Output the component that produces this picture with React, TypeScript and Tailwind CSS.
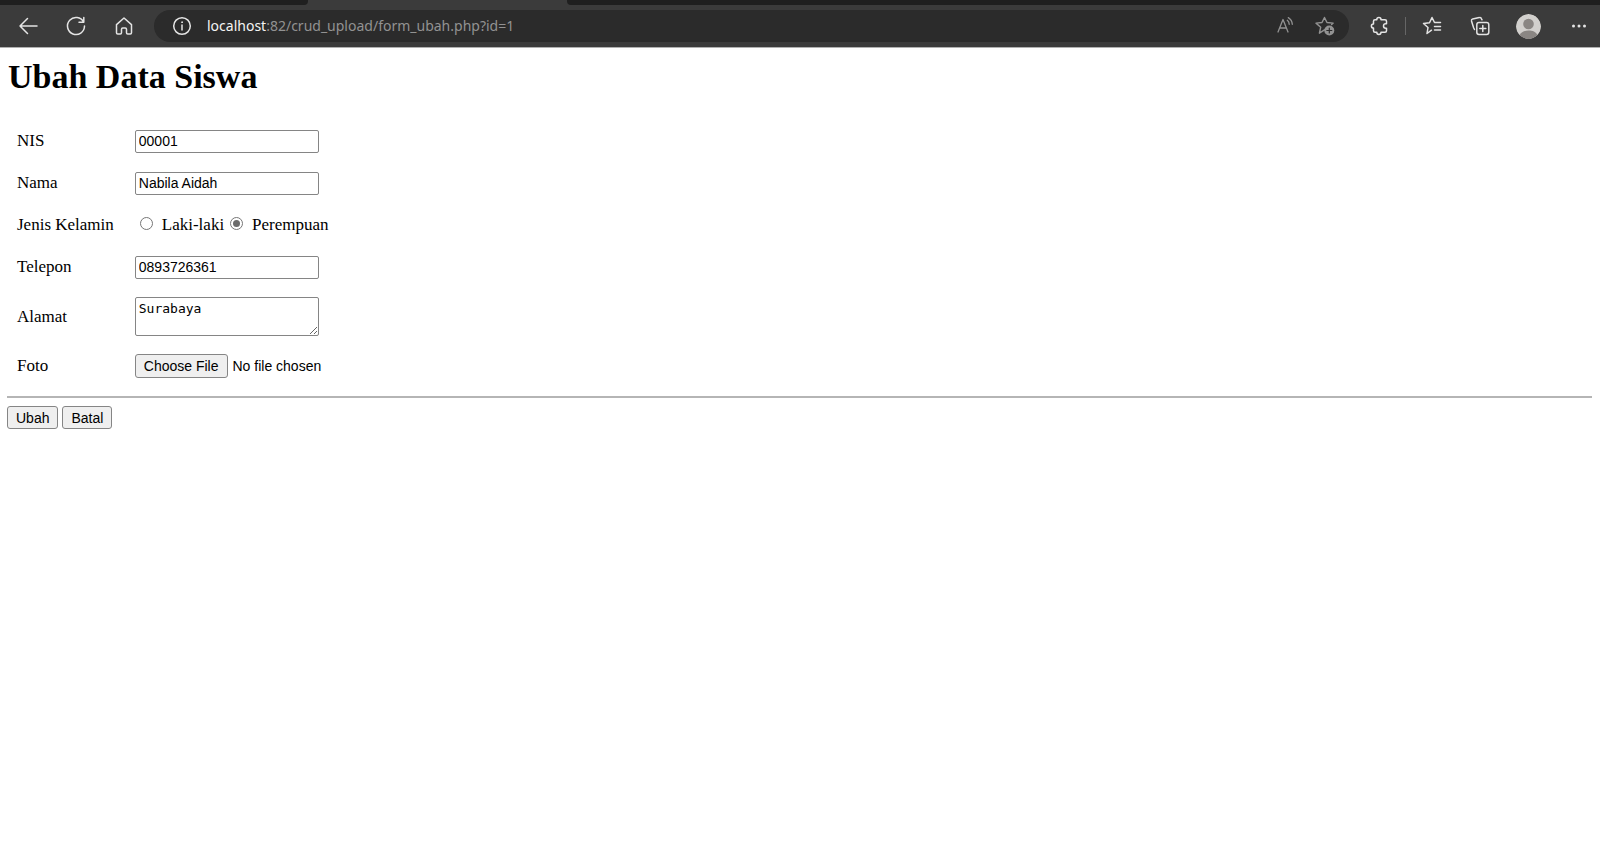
import type { ReactNode } from "react";

function ToolbarButton({ label, children }: { label: string; children: ReactNode }) {
  return (
    <button type="button" aria-label={label} className="size-6 shrink-0">
      <svg viewBox="0 0 24 24" fill="none" stroke="currentColor" strokeWidth="1.5" strokeLinecap="round" strokeLinejoin="round" className="size-6">
        {children}
      </svg>
    </button>
  );
}

function BrowserBar() {
  return (
    <header className="bg-[#3b3b3b] text-[#e4e4e4]">
      {/* Tab strip */}
      <div className="flex h-[5px]">
        <div className="w-[308px] rounded-br-[4px] bg-[#1f1f1f]" />
        <div className="w-[259px]" />
        <div className="flex-1 rounded-bl-[4px] bg-[#1f1f1f]" />
      </div>

      <div className="flex h-[43px] items-center border-b border-[#b0b0b0] pr-[9px] pl-4">
        <nav className="mr-[18px] flex gap-6">
          <ToolbarButton label="Back">
            <path d="M21 12H4M11.500 4.500 4 12l7.500 7.500" />
          </ToolbarButton>
          <ToolbarButton label="Refresh">
            <path d="M19.600 8.200A8.500 8.500 0 1 0 20.500 12M19.800 3.500v4.800H15" />
          </ToolbarButton>
          <ToolbarButton label="Home">
            <path d="M4.500 10.600 12 4l7.500 6.600v8.200a1.200 1.200 0 0 1-1.200 1.200h-2.600a1.200 1.200 0 0 1-1.200-1.200v-3.600a1.200 1.200 0 0 0-1.200-1.200h-2.600a1.200 1.200 0 0 0-1.200 1.200v3.600A1.200 1.200 0 0 1 8.300 20H5.700a1.200 1.200 0 0 1-1.200-1.200z" />
          </ToolbarButton>
        </nav>

        <div className="mr-[18px] flex h-8 flex-1 items-center rounded-full bg-[#2b2b2b] pr-3 pl-4">
          <ToolbarButton label="Site information">
            <circle cx="12" cy="12" r="8.300" />
            <path d="M12 11v5" />
            <circle cx="12" cy="8.200" r="0.500" fill="currentColor" strokeWidth="0.900" />
          </ToolbarButton>
          <p className="ml-[13px] flex-1 font-['Noto_Sans','Open_Sans',sans-serif] text-[14px] leading-5 text-[#929292]">
            <span className="text-[#f4f4f4]">localhost</span>:82/crud_upload/form_ubah.php?id=1
          </p>
          <div className="flex gap-[15px] text-[#929292]">
            <ToolbarButton label="Read aloud">
              <path d="m4 18 5-12.500L14 18M5.700 14h6.600" strokeWidth="1.300" />
              <path d="M13.300 6.300a5 5 0 0 1 1.900 4M14.300 3.600a8.500 8.500 0 0 1 4 6.700" strokeWidth="1.300" />
            </ToolbarButton>
            <ToolbarButton label="Add this page to favorites">
              <path d="m11.500 15.800-5.100 3.400 1.300-6L3 9.100l6-.6L11.500 3.500 14 8.500l6.200.6-1.600 1.500" strokeWidth="1.400" />
              <circle cx="16.300" cy="16.500" r="5" fill="currentColor" stroke="none" />
              <path d="M16.300 14v5M13.800 16.500h5" stroke="#2b2b2b" strokeWidth="1.200" />
            </ToolbarButton>
          </div>
        </div>

        <ToolbarButton label="Extensions">
          <path d="M9.800 5.700a2.100 2.100 0 0 1 4.200 0h4a1.500 1.500 0 0 1 1.500 1.500v2.600h-.8a2.200 2.200 0 0 0 0 4.400h.8v2.600a1.500 1.500 0 0 1-1.500 1.500h-4a2.100 2.100 0 0 1-4.200 0H8a1.500 1.500 0 0 1-1.500-1.500v-2.700a2.100 2.100 0 0 1 0-4.200V7.200A1.500 1.500 0 0 1 8 5.700z" />
        </ToolbarButton>
        <div className="mx-3.5 h-[18px] w-px bg-[#666666]" />
        <div className="flex items-center gap-6">
          <ToolbarButton label="Favorites">
            <path d="M11.500 16.200 7 19.500l1-6-4.500-4 6-.8L12 3.500l2.500 5H20.500M14.500 12.500h6M14.500 16h6" />
          </ToolbarButton>
          <ToolbarButton label="Collections">
            <path d="M6.500 15.500 5.700 14 3.500 7a1.800 1.800 0 0 1 1.200-2.100l6.600-1.300a1.800 1.800 0 0 1 2.200 1.200l.5 1" />
            <rect x="8.800" y="8.500" width="12" height="12" rx="2.200" />
            <path d="M14.800 11.500v6M11.800 14.500h6" />
          </ToolbarButton>
          <button type="button" aria-label="Profile" className="size-[25px] shrink-0 overflow-hidden rounded-full">
            <svg viewBox="0 0 25 25" className="size-[25px]">
              <circle cx="12.500" cy="12.500" r="12.500" fill="#d2d0cd" />
              <circle cx="12.500" cy="10" r="5.300" fill="#8a8683" />
              <path d="M3.500 21.200C5 17.800 8.500 16.500 12.500 16.500s7.500 1.300 9 4.700A12.500 12.500 0 0 1 3.500 21.200z" fill="#8a8683" />
            </svg>
          </button>
        </div>
        <div className="ml-[26px] flex">
          <ToolbarButton label="Settings and more">
            <g fill="currentColor" stroke="none">
              <circle cx="6.500" cy="12" r="1.500" />
              <circle cx="12" cy="12" r="1.500" />
              <circle cx="17.500" cy="12" r="1.500" />
            </g>
          </ToolbarButton>
        </div>
      </div>
    </header>
  );
}

const fieldClass =
  "block w-[184px] rounded-[2px] border border-[#858585] bg-white px-[3px] font-['Liberation_Sans',Arial,sans-serif] text-[14px] text-black";

const buttonClass =
  "h-[23px] rounded-[3px] border border-[#858585] bg-[#efefef] px-2 font-['Liberation_Sans',Arial,sans-serif] text-[14px] leading-5 text-black";

function Row({ label, htmlFor, children }: { label: string; htmlFor?: string; children: ReactNode }) {
  return (
    <tr>
      <th scope="row" className="py-[9px] pr-[21px] text-left font-normal">
        {htmlFor ? <label htmlFor={htmlFor}>{label}</label> : label}
      </th>
      <td className="py-[9px]">{children}</td>
    </tr>
  );
}

function Gender({ label, checked }: { label: string; checked?: boolean }) {
  return (
    <label className="flex items-start gap-[9px]">
      <input
        type="radio"
        name="jenis_kelamin"
        defaultChecked={checked}
        className="mt-1 size-[13px] appearance-none rounded-full border border-[#767676] bg-white p-[2px] checked:bg-[#6b6b6b] checked:bg-clip-content"
      />
      {label}
    </label>
  );
}

export default function App() {
  return (
    <div className="min-h-screen bg-white font-['Liberation_Serif','Times_New_Roman',serif] text-[17px] leading-6 text-black">
      <BrowserBar />

      <main className="pt-[9px] pr-2 pl-[7px]">
        <h1 className="pl-px text-[34px] leading-10 font-bold">Ubah Data Siswa</h1>

        <form className="mt-[23px]">
          <table className="ml-2.5 border-collapse">
            <tbody>
              <Row label="NIS" htmlFor="nis">
                <input id="nis" type="text" defaultValue="00001" className={`${fieldClass} h-[23px]`} />
              </Row>
              <Row label="Nama" htmlFor="nama">
                <input id="nama" type="text" defaultValue="Nabila Aidah" className={`${fieldClass} h-[23px]`} />
              </Row>
              <Row label="Jenis Kelamin">
                <div className="flex gap-[6px] pl-[5px]">
                  <Gender label="Laki-laki" />
                  <Gender label="Perempuan" checked />
                </div>
              </Row>
              <Row label="Telepon" htmlFor="telepon">
                <input id="telepon" type="text" defaultValue="0893726361" className={`${fieldClass} h-[23px]`} />
              </Row>
              <Row label="Alamat" htmlFor="alamat">
                <textarea
                  id="alamat"
                  defaultValue="Surabaya"
                  className="block h-[39px] w-[184px] rounded-[2px] border border-[#858585] bg-white px-[3px] py-[3px] font-['DejaVu_Sans_Mono',monospace] text-[13px] leading-4"
                />
              </Row>
              <Row label="Foto" htmlFor="foto">
                <input
                  id="foto"
                  type="file"
                  className="block font-['Liberation_Sans',Arial,sans-serif] text-[14px] leading-5 file:mr-[5px] file:h-6 file:rounded-[3px] file:border file:border-solid file:border-[#858585] file:bg-[#efefef] file:px-2"
                />
              </Row>
            </tbody>
          </table>

          <hr className="mt-[9px] mb-2 border-t-2 border-[#b5b5b5]" />

          <div className="flex gap-1">
            <button type="submit" className={buttonClass}>Ubah</button>
            <button type="button" className={buttonClass}>Batal</button>
          </div>
        </form>
      </main>
    </div>
  );
}
